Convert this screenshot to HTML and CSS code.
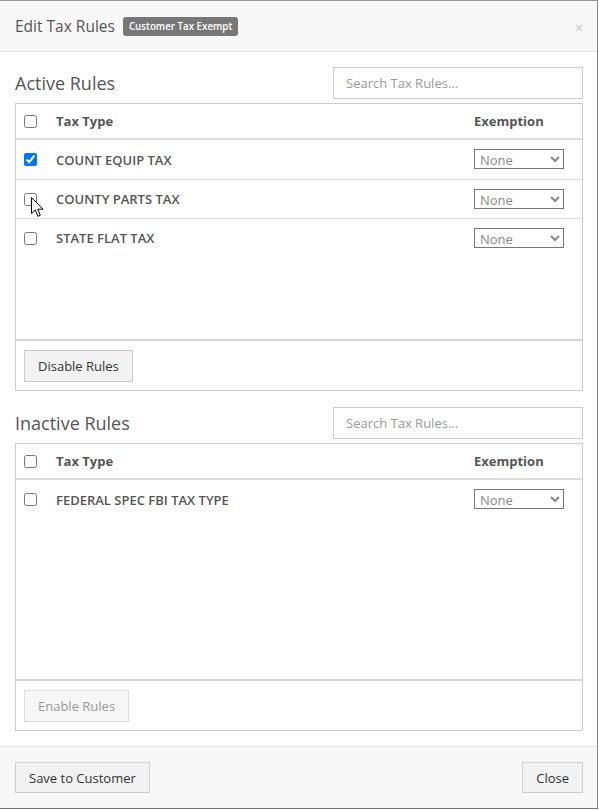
FILE: index.html
```html
<!DOCTYPE html>
<html>
<head>
<meta charset="utf-8">
<link rel="stylesheet" href="styles.css">
</head>
<body>
<div class="modal">
  <div class="modal-header">
    <h4 class="title">Edit Tax Rules</h4>
    <span class="badge">Customer Tax Exempt</span>
    <span class="close">×</span>
  </div>
  <div class="modal-body">
    <section class="rules">
      <div class="rules-head">
        <h3>Active Rules</h3>
        <input class="search" type="text" placeholder="Search Tax Rules...">
      </div>
      <div class="panel">
        <div class="row head">
          <div class="c-check"><input type="checkbox"></div>
          <div class="c-type">Tax Type</div>
          <div class="c-ex">Exemption</div>
        </div>
        <div class="rows">
          <div class="row">
            <div class="c-check"><input type="checkbox" checked></div>
            <div class="c-type">COUNT EQUIP TAX</div>
            <div class="c-ex"><select><option>None</option></select></div>
          </div>
          <div class="row">
            <div class="c-check cursor-host"><input type="checkbox">
              <svg class="cursor" width="13" height="21" viewBox="0 0 13 21"><path d="M0.5 0.5 L0.5 16.5 L4.3 12.9 L6.9 19.3 L9.3 18.3 L6.8 12.2 L12 12.2 Z" fill="#fff" stroke="#000" stroke-width="1" stroke-linejoin="round"/></svg>
            </div>
            <div class="c-type">COUNTY PARTS TAX</div>
            <div class="c-ex"><select><option>None</option></select></div>
          </div>
          <div class="row">
            <div class="c-check"><input type="checkbox"></div>
            <div class="c-type">STATE FLAT TAX</div>
            <div class="c-ex"><select><option>None</option></select></div>
          </div>
        </div>
        <div class="panel-foot">
          <button class="btn">Disable Rules</button>
        </div>
      </div>
    </section>
    <section class="rules second">
      <div class="rules-head">
        <h3>Inactive Rules</h3>
        <input class="search" type="text" placeholder="Search Tax Rules...">
      </div>
      <div class="panel">
        <div class="row head">
          <div class="c-check"><input type="checkbox"></div>
          <div class="c-type">Tax Type</div>
          <div class="c-ex">Exemption</div>
        </div>
        <div class="rows">
          <div class="row">
            <div class="c-check"><input type="checkbox"></div>
            <div class="c-type">FEDERAL SPEC FBI TAX TYPE</div>
            <div class="c-ex"><select><option>None</option></select></div>
          </div>
        </div>
        <div class="panel-foot">
          <button class="btn" disabled>Enable Rules</button>
        </div>
      </div>
    </section>
  </div>
  <div class="modal-footer">
    <button class="btn">Save to Customer</button>
    <button class="btn">Close</button>
  </div>
</div>
</body>
</html>
```
FILE: styles.css
```css
* { box-sizing: border-box; }
html, body { margin: 0; padding: 0; background: #fff; }
body {
  font-family: "Open Sans", "Noto Sans", sans-serif;
  color: #555;
  font-size: 13px;
}
.modal {
  width: 598px;
  height: 809px;
  border-top: 1px solid #999;
  border-right: 1px solid #888;
  border-bottom: 1px solid #777;
  background: #fff;
  display: flex;
  flex-direction: column;
}
.modal-header {
  height: 52px;
  background: #f7f7f7;
  border-bottom: 1px solid #e5e5e5;
  display: flex;
  align-items: center;
  padding: 0 14px 0 15px;
  position: relative;
}
.title {
  margin: 0;
  font-size: 15.5px;
  font-weight: 400;
  color: #555;
}
.badge {
  margin-left: 8px;
  background: #777;
  color: #fff;
  font-size: 9.75px;
  font-weight: 600;
  border-radius: 3px;
  height: 19px;
  line-height: 19px;
  padding: 0 6px 0 6px;
}
.close {
  margin-left: auto;
  color: #c4c4c4;
  font-size: 14px;
  margin-top: 2px;
}
.modal-body {
  padding: 15px 14px 15px 15px;
  flex: 1;
  display: flex;
  flex-direction: column;
  gap: 16px;
}
.rules-head {
  display: flex;
  align-items: center;
  justify-content: space-between;
  height: 32px;
  margin-bottom: 4px;
}
.rules-head h3 {
  margin: 0;
  font-size: 18px;
  font-weight: 400;
  color: #555;
}
.search {
  width: 250px;
  height: 32px;
  border: 1px solid #ccc;
  padding: 0 12px;
  font-family: inherit;
  font-size: 13px;
  color: #555;
  outline: none;
}
.search::placeholder { color: #999; }
.panel {
  border: 1px solid #ccc;
  display: flex;
  flex-direction: column;
}
.row {
  display: grid;
  grid-template-columns: 32px 1fr 116px;
  align-items: center;
  height: 39px;
}
.rows .row + .row { border-top: 1px solid #ddd; }
.row.head {
  height: 36px;
  border-bottom: 2px solid #ddd;
  font-weight: 700;
  color: #555;
}
.rows {
  height: 201px;
  border-bottom: 2px solid #d4d4d4;
}
.c-check {
  padding-left: 8px;
  display: flex;
  align-items: center;
}
.c-check input {
  margin: 0;
  width: 13px;
  height: 13px;
}
.cursor-host { position: relative; }
.cursor {
  position: absolute;
  left: 15px;
  top: 4px;
}
.c-type {
  padding-left: 8px;
  font-weight: 600;
  color: #555;
}
.c-ex {
  padding-left: 8px;
  display: flex;
  align-items: center;
}
.row.head .c-type, .row.head .c-ex { font-weight: 700; }
select {
  width: 90px;
  height: 20px;
  margin-top: -1px;
  font-family: inherit;
  font-size: 13px;
  color: #888;
  border: 1px solid #767676;
  border-radius: 0;
  background: #fff;
  padding: 0 0 0 1px;
}
.panel-foot {
  height: 49px;
  padding: 0 8px;
  display: flex;
  align-items: center;
}
.btn {
  height: 32px;
  padding: 0 13px;
  background: #f2f2f2;
  border: 1px solid #ccc;
  border-radius: 0;
  font-family: inherit;
  font-size: 13px;
  color: #333;
}
.btn:disabled {
  background: #f6f6f6;
  color: #999;
  border-color: #ddd;
}
.modal-footer {
  height: 63px;
  background: #f7f7f7;
  border-top: 1px solid #e5e5e5;
  padding: 0 14px 0 15px;
  display: flex;
  align-items: center;
  justify-content: space-between;
}
.modal-footer .btn {
  height: 31px;
  padding: 0 13px;
  font-size: 13px;
}
```
